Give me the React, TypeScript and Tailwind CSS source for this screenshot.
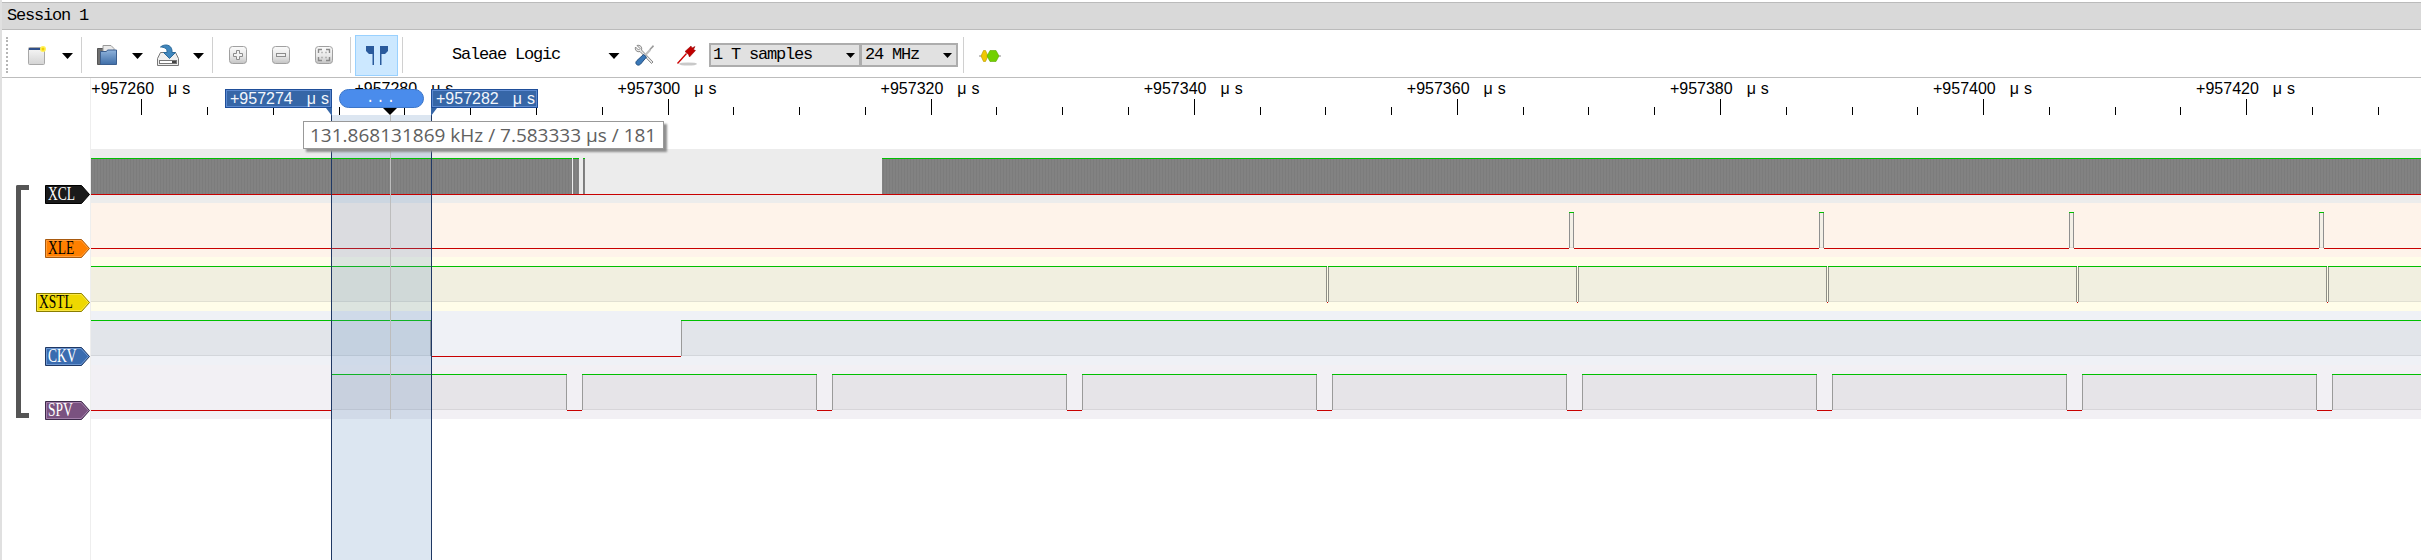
import React from "react";

const GREEN = "#00c000";
const RED = "#c80000";
const LEFT = 91;
const W = 2421 - LEFT;

type Seg = [number, number];

function Wave({
  highs,
  fill,
  edge = "#9a9a9a",
  shade = "#00000010",
  showEdges = true,
  redAll = false,
  className = "block",
}: {
  highs: Seg[];
  fill: string;
  edge?: string;
  shade?: string;
  showEdges?: boolean;
  redAll?: boolean;
  className?: string;
}) {
  const lows: Seg[] = [];
  let cur = LEFT;
  for (const [a, b] of highs) {
    if (a > cur) lows.push([cur, a]);
    cur = b;
  }
  if (cur < 2421) lows.push([cur, 2421]);
  const reds: Seg[] = redAll ? [[LEFT, 2421]] : lows;
  return (
    <svg width={W} height={54} shapeRendering="crispEdges" className={className}>
      <defs>
        <pattern id="dense" width="3" height="10" patternUnits="userSpaceOnUse">
          <rect width="3" height="10" fill="#828282" />
          <rect width="1" height="10" fill="#7c7c7c" />
        </pattern>
      </defs>
      {highs.map(([a, b], i) => (
        <g key={i}>
          <rect x={a - LEFT} y={9} width={b - a} height={36} fill={fill} />
          <rect x={a - LEFT} y={44} width={b - a} height={1} fill={shade} />
          {showEdges && a > LEFT && <rect x={a - LEFT} y={9} width={1} height={36} fill={edge} />}
          {showEdges && b < 2421 && <rect x={b - LEFT - 1} y={9} width={1} height={36} fill={edge} />}
          <rect x={a - LEFT} y={9} width={b - a} height={1} fill={GREEN} />
        </g>
      ))}
      {reds.map(([a, b], i) => (
        <rect key={i} x={a - LEFT} y={45} width={b - a} height={1} fill={RED} />
      ))}
    </svg>
  );
}

const xlePulses: Seg[] = [1569, 1819, 2069, 2319].map((x) => [x, x + 5] as Seg);
const xstlHighs: Seg[] = [
  [LEFT, 1327],
  [1328, 1577],
  [1578, 1827],
  [1828, 2077],
  [2078, 2327],
  [2328, 2421],
];
const ckvHighs: Seg[] = [
  [LEFT, 431],
  [681, 2421],
];
const spvHighs: Seg[] = [
  [331, 567],
  [582, 817],
  [832, 1067],
  [1082, 1317],
  [1332, 1567],
  [1582, 1817],
  [1832, 2067],
  [2082, 2317],
  [2332, 2421],
];
const xclHighs: Seg[] = [
  [LEFT, 572],
  [573, 579],
  [583, 585],
  [882, 2421],
];

const majors = [0, 1, 2, 3, 4, 5, 6, 7, 8].map((n) => ({
  x: 141.3 + 263.1 * n,
  label: `+${957260 + n * 20}`,
}));
const minors: number[] = [];
for (let x = 141.3 + 65.78; x < 2421; x += 65.78) minors.push(x);

function TimeText({ value, light = false }: { value: string; light?: boolean }) {
  return (
    <span
      className={`flex whitespace-nowrap font-['Liberation_Sans',sans-serif] text-[16px] leading-[18px] ${
        light ? "text-[#f2f6fc]" : "text-black"
      }`}
    >
      <span>{value}</span>
      <span className="ml-[14px]">μ</span>
      <span className="ml-[5px]">s</span>
    </span>
  );
}

function Arrow({ className = "" }: { className?: string }) {
  return (
    <svg width="11" height="6" viewBox="0 0 11 6" className={className}>
      <path d="M0 0H11L5.5 6Z" fill="#000" />
    </svg>
  );
}

function Sep({ className = "" }: { className?: string }) {
  return <div className={`w-px h-[36px] bg-[#d0d0d0] ${className}`} />;
}

function ZoomButton({ kind, className = "" }: { kind: "plus" | "minus" | "fit"; className?: string }) {
  return (
    <svg width="18" height="18" viewBox="0 0 18 18" className={className}>
      <defs>
        <linearGradient id={`zb-${kind}`} x1="0" y1="0" x2="0" y2="1">
          <stop offset="0" stopColor="#fbfbfb" />
          <stop offset="0.55" stopColor="#e8e8e8" />
          <stop offset="1" stopColor="#c4c4c4" />
        </linearGradient>
      </defs>
      <rect x="0.5" y="0.5" width="17" height="17" rx="3" fill={`url(#zb-${kind})`} stroke="#a0a0a0" />
      {kind === "plus" && (
        <path d="M7.5 4.5h3v3h3v3h-3v3h-3v-3h-3v-3h3z" fill="#f4f4f4" stroke="#8c8c8c" />
      )}
      {kind === "minus" && <rect x="4.5" y="7.5" width="9" height="3" fill="#f0f0f0" stroke="#8c8c8c" />}
      {kind === "fit" && (
        <path
          d="M3.5 7V3.5H7M11 3.5h3.5V7M3.5 11v3.5H7M11 14.5h3.5V11M6.5 6.5h1M10.5 6.5h1M6.5 11.5h1M10.5 11.5h1"
          fill="none"
          stroke="#8a8a8a"
          strokeWidth="1.4"
        />
      )}
    </svg>
  );
}

function Combo({ text, className }: { text: string; className: string }) {
  return (
    <div
      className={`h-[24px] border-2 border-[#adadad] bg-[#e1e1e1] flex items-center justify-between font-['Liberation_Mono',monospace] text-[17px] tracking-[-1.2px] text-black ${className}`}
    >
      <span className="whitespace-pre">{text}</span>
      <svg width="9" height="5" viewBox="0 0 9 5" className="mr-[4px]">
        <path d="M0 0H9L4.5 5Z" fill="#000" />
      </svg>
    </div>
  );
}

function Toolbar() {
  return (
    <div className="h-[48px] border-b border-[#bdbdbd] bg-white pt-[3px] flex items-center">
      <div className="ml-[4px] w-[2px] h-[36px] border-l-2 border-dotted border-[#b5b5b5]" />
      {/* new session */}
      <svg width="18" height="19" viewBox="0 0 18 19" className="ml-[20px]">
        <defs>
          <linearGradient id="win" x1="0" y1="0" x2="0" y2="1">
            <stop offset="0" stopColor="#f8f8f8" />
            <stop offset="1" stopColor="#d4d4d4" />
          </linearGradient>
        </defs>
        <rect x="0.5" y="1.5" width="16" height="17" rx="1" fill="url(#win)" stroke="#a8a8a8" />
        <rect x="1" y="2" width="15" height="2" fill="#2f4f8a" />
        <circle cx="15" cy="3" r="3" fill="#fff15a" />
        <circle cx="15" cy="3" r="1.5" fill="#f2cf00" />
      </svg>
      <Arrow className="ml-[16px] mt-[2px]" />
      <Sep className="ml-[8px]" />
      {/* open */}
      <svg width="20" height="20" viewBox="0 0 20 20" className="ml-[15px]">
        <defs>
          <linearGradient id="fold" x1="0" y1="0" x2="0" y2="1">
            <stop offset="0" stopColor="#8fb3dc" />
            <stop offset="1" stopColor="#3f6ea8" />
          </linearGradient>
        </defs>
        <path d="M0.5 3.5h7l1 2v14h-8z" fill="#6f6f6f" stroke="#555" />
        <path d="M6 0.5h8l3 3v5H6z" fill="#e9e9e9" stroke="#9a9a9a" />
        <path d="M3.5 19.5V6.5h6l1-1.5h9v14.5z" fill="url(#fold)" stroke="#3c5f8f" />
      </svg>
      <Arrow className="ml-[15px] mt-[2px]" />
      {/* save */}
      <svg width="22" height="22" viewBox="0 0 22 22" className="ml-[14px]">
        <path d="M3.5 8.5h15l3 6v7H0.5v-7z" fill="#efefef" stroke="#777" />
        <rect x="2.5" y="16.5" width="17" height="3" fill="#fff" stroke="#777" />
        <rect x="15" y="17" width="4" height="2" fill="#444" />
        <path d="M3.5 3c4-3.5 11-2.5 11.5 3.5v2h3.5l-6 6-6-6H10V7C10 4.5 7 3 3.5 3z" fill="#3f86bd" stroke="#2c6a9a" />
      </svg>
      <Arrow className="ml-[14px] mt-[2px]" />
      <Sep className="ml-[8px]" />
      <ZoomButton kind="plus" className="ml-[16px]" />
      <ZoomButton kind="minus" className="ml-[25px]" />
      <ZoomButton kind="fit" className="ml-[25px]" />
      <Sep className="ml-[17px]" />
      <div className="ml-[4px] w-[43px] h-[41px] bg-[#cce8ff] border border-[#99d1ff] flex items-center justify-center">
        <svg width="22" height="19" viewBox="0 0 22 19">
          <path d="M0 0h8v19H6.5V8H3L0 5z" fill="#2a5a9c" />
          <path d="M22 0h-8v19h1.5V8H19l3-3z" fill="#2a5a9c" />
        </svg>
      </div>
      <Sep className="ml-[4px]" />
      <span className="ml-[49px] w-[108px] whitespace-pre font-['Liberation_Mono',monospace] text-[17px] tracking-[-1.2px] text-black">
        Saleae Logic
      </span>
      <Arrow className="ml-[48px] mt-[1px] w-[12px]" />
      {/* tools */}
      <svg width="20" height="22" viewBox="0 0 20 22" className="ml-[14px]">
        <path d="M3 1.5 6 4.5 4.5 6 1.5 3C0.5 6 3 8.5 6 7.5L17.5 19.5 19 18 7.5 6C8.5 3 6 0.5 3 1.5Z" fill="#e8e8e8" stroke="#8a8a8a" strokeWidth="1" />
        <path d="M19 1 15 5.5 16 6.5 20 2.5Z" fill="#9a9a9a" />
        <path d="M15.5 5 9 12l1.5 1.5 6.5-7z" fill="#bfbfbf" />
        <path d="M9.5 10.5 3 16.5c-2 2-1 4 .5 4.5 1.5.5 3-.5 4-2l5-6z" fill="#3a78b8" stroke="#234f80" />
      </svg>
      {/* probe */}
      <svg width="20" height="22" viewBox="0 0 20 22" className="ml-[23px]">
        <ellipse cx="11" cy="20" rx="9" ry="1.6" fill="#c9c9c9" />
        <path d="M0 19 9 9l1 1-9 10z" fill="#c00" />
        <path d="M8 7.5 14 2l1 2 3-1.5-1.5 3 2 1-6 6.5-1-2.5z" fill="#c00000" stroke="#8c0000" strokeWidth="0.5" />
      </svg>
      <Combo text="1 T samples" className="ml-[12px] w-[152px] pl-[2px]" />
      <Combo text="24 MHz" className="w-[98px] pl-[3px] -ml-[1px]" />
      <Sep className="ml-[5px]" />
      {/* protocol */}
      <svg width="22" height="14" viewBox="0 0 22 14" className="ml-[15px] mt-[1px]">
        <rect x="0" y="6.5" width="22" height="1" fill="#8a8a8a" />
        <path d="M2 7 4.5 1.5H6.5L9 7 6.5 12.5H4.5Z" fill="#f0c800" stroke="#b59500" strokeWidth="0.6" />
        <path d="M8 7 11 1.5H17L20 7 17 12.5H11Z" fill="#72d000" stroke="#5aa800" strokeWidth="0.6" />
      </svg>
    </div>
  );
}

function Tag({
  name,
  fill,
  stroke,
  inner,
  text,
  width,
}: {
  name: string;
  fill: string;
  stroke: string;
  inner?: string;
  text: string;
  width: number;
}) {
  const r = width - 0.5;
  return (
    <div className="relative h-[19px] -mb-px" style={{ width }}>
      <svg width={width} height={19} className="absolute inset-0">
        <path d={`M0.5 0.5H${r - 8}L${r} 9.5L${r - 8} 18.5H0.5Z`} fill={fill} stroke={stroke} />
        {inner && (
          <path d={`M1.5 1.5H${r - 8.5}L${r - 1.2} 9.5L${r - 8.5} 17.5H1.5Z`} fill="none" stroke={inner} strokeOpacity="0.6" />
        )}
      </svg>
      <span
        className="relative block pl-[4px] origin-left scale-x-[0.75] font-['Liberation_Serif',serif] text-[18px] leading-[19px] whitespace-nowrap"
        style={{ color: text }}
      >
        {name}
      </span>
    </div>
  );
}

const tags = [
  { name: "XCL", fill: "#1a1a1a", stroke: "#000", text: "#fff", width: 45 },
  { name: "XLE", fill: "#ff8000", stroke: "#a85a10", inner: "#ffb060", text: "#000", width: 45 },
  { name: "XSTL", fill: "#efd800", stroke: "#8a7d00", inner: "#fff070", text: "#000", width: 54 },
  { name: "CKV", fill: "#3a6cb0", stroke: "#1f3864", inner: "#8fb4e8", text: "#fff", width: 45 },
  { name: "SPV", fill: "#7a5280", stroke: "#3d2a4a", inner: "#c0a0c8", text: "#fff", width: 45 },
];

export default function App() {
  return (
    <div className="w-[2421px] h-[560px] overflow-hidden bg-white border-l-2 border-[#e0e0e0] pt-[2px]">
      <div className="h-[28px] bg-[#d9d9d9] border-y border-[#bbbbbb] flex items-center pl-[5px]">
        <span className="whitespace-pre font-['Liberation_Mono',monospace] text-[17px] tracking-[-1.2px] text-black">
          Session 1
        </span>
      </div>
      <Toolbar />
      <div className="flex">
        {/* left column */}
        <div className="w-[89px] flex border-r border-[#eeeeee]">
          <div className="ml-[14px] mt-[107px] w-[13px] h-[233px] border-l-[5px] border-y-[5px] border-[#555555] rounded-tl-[2px]" />
          <div className="flex-1 flex flex-col items-end pt-[71px]">
            {tags.map((t) => (
              <div key={t.name} className="h-[54px] flex items-end">
                <Tag {...t} />
              </div>
            ))}
          </div>
        </div>
        {/* right column */}
        <div className="relative w-[2330px] h-[482px]">
          <div className="relative h-[71px]">
            <svg width={W} height={71} shapeRendering="crispEdges" className="block">
              {majors.map((m) => (
                <rect key={m.x} x={Math.round(m.x - LEFT)} y={21} width={1} height={16} fill="#000" />
              ))}
              {minors.map((x) => (
                <rect key={x} x={Math.round(x - LEFT)} y={29} width={1} height={8} fill="#000" />
              ))}
            </svg>
            {majors.map((m) => (
              <div key={m.label} className="absolute top-[2px]" style={{ left: m.x - LEFT - 50 }}>
                <TimeText value={m.label} />
              </div>
            ))}
          </div>
          <div className="relative h-[54px] bg-[#ececec]">
            <Wave highs={xclHighs} fill="url(#dense)" showEdges={false} shade="#00000000" redAll className="relative z-20 block" />
          </div>
          <div className="h-[54px] bg-[#fef3ea]">
            <Wave highs={xlePulses} fill="#f3efe6" edge="#8f8f8f" />
          </div>
          <div className="h-[54px] bg-[#fffde9]">
            <Wave highs={xstlHighs} fill="#f1efe0" edge="#8f8f88" />
          </div>
          <div className="h-[54px] bg-[#eff1f6]">
            <Wave highs={ckvHighs} fill="#e2e5ea" />
          </div>
          <div className="h-[54px] bg-[#f2f0f4]">
            <Wave highs={spvHighs} fill="#e6e4e8" />
          </div>

          {/* selection overlay */}
          <div className="absolute left-[240px] top-[37px] bottom-0 w-[101px] bg-[rgba(80,130,185,0.2)] z-10" />
          <div className="absolute left-[240px] top-[37px] bottom-0 w-[101px] border-x border-[#1f3864] z-30" />
          <div className="absolute left-[299px] top-[37px] h-[304px] w-px bg-[#bdbdbd] z-30" />

          {/* left cursor flag */}
          <div className="absolute left-[134px] top-[11px] w-[107px] h-[19px] bg-[#3666a7] border border-[#1f4e99] shadow-[inset_0_0_0_1px_#5c8ad0] flex items-center pl-[4px] z-40">
            <TimeText value="+957274" light />
          </div>
          <svg width="6" height="8" viewBox="0 0 6 8" className="absolute left-[235px] top-[30px] z-40">
            <path d="M0 0H6V8Z" fill="#3666a7" />
          </svg>
          {/* right cursor flag */}
          <div className="absolute left-[340px] top-[11px] w-[107px] h-[19px] bg-[#3666a7] border border-[#1f4e99] shadow-[inset_0_0_0_1px_#5c8ad0] flex items-center pl-[4px] z-40">
            <TimeText value="+957282" light />
          </div>
          <svg width="6" height="8" viewBox="0 0 6 8" className="absolute left-[340px] top-[30px] z-40">
            <path d="M0 0H6L0 8Z" fill="#3666a7" />
          </svg>
          {/* pill */}
          <div className="absolute left-[248px] top-[11px] w-[85px] h-[19px] rounded-[10px] bg-[#4a8cec] border border-[#3b75c8] flex items-end justify-center font-['Liberation_Mono',monospace] text-[14px] leading-[17px] tracking-[2px] text-white z-40">
            ...
          </div>
          <svg width="14" height="7" viewBox="0 0 14 7" className="absolute left-[292px] top-[30px] z-40">
            <path d="M0 0H14L7 7Z" fill="#000" />
          </svg>
          {/* tooltip */}
          <div className="absolute left-[212px] top-[43px] w-[361px] h-[28px] bg-white border border-[#999999] shadow-[3px_3px_2px_#8f8f8f] flex items-center pl-[6px] font-['Open_Sans',sans-serif] text-[19px] leading-none text-[#606060] whitespace-nowrap z-50">
            131.868131869 kHz / 7.583333 μs / 181
          </div>
        </div>
      </div>
    </div>
  );
}
